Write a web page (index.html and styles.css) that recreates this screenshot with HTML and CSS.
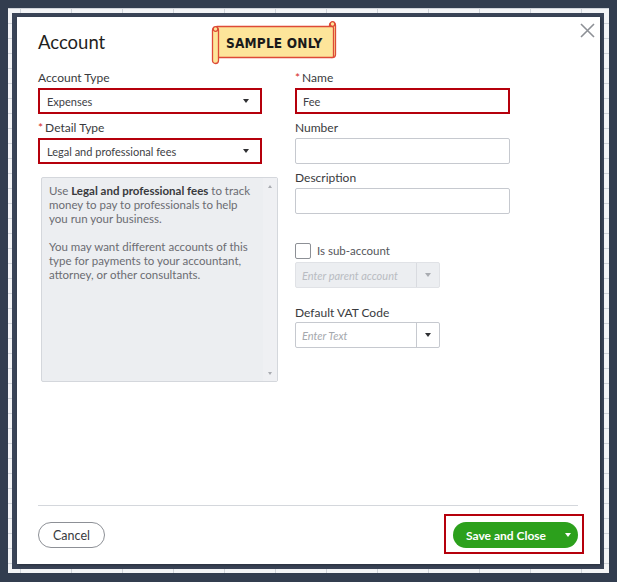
FILE: index.html
```html
<!DOCTYPE html>
<html lang="en">
  <head>
    <meta charset="UTF-8" />
    <meta name="viewport" content="width=device-width, initial-scale=1.0" />
    <title>Account</title>
    <link rel="stylesheet" href="styles.css">
  </head>
  <body>
    <div class="sheet">
      <div class="backdrop">
        <div class="dialog">
          <!-- watermark banner -->
          <div class="sample-badge">
            <svg width="128" height="46" viewBox="0 0 128 46">
              <rect x="119.5" y="3.5" width="6" height="35" rx="3" class="roll" />
              <rect x="5.5" y="7.5" width="118" height="31" rx="1.5" class="roll" />
              <rect x="2.5" y="8.5" width="6" height="36" rx="3" class="roll" />
              <circle cx="5.5" cy="10" r="2.3" class="roll" />
              <circle cx="122.5" cy="5" r="2.3" class="roll" />
            </svg>
            <span>SAMPLE ONLY</span>
          </div>

          <button class="close" type="button" aria-label="Close">
            <svg width="15" height="15" viewBox="0 0 15 15">
              <path d="M1 1 L14 14 M14 1 L1 14" />
            </svg>
          </button>

          <h1 class="title">Account</h1>

          <div class="columns">
            <!-- left column -->
            <div class="col col-left">
              <div class="field">
                <label>Account Type</label>
                <div class="select flagged">
                  <span>Expenses</span>
                  <span class="caret"></span>
                </div>
              </div>
              <div class="field">
                <label class="required">Detail Type</label>
                <div class="select flagged">
                  <span>Legal and professional fees</span>
                  <span class="caret"></span>
                </div>
              </div>
              <div class="help-box">
                <div class="help-text">
                  <p>Use <b>Legal and professional fees</b> to track money to pay to professionals to help you run your business.</p>
                  <p>You may want different accounts of this type for payments to your accountant, attorney, or other consultants.</p>
                </div>
                <div class="help-scroll">
                  <span class="arrow-up"></span>
                  <span class="arrow-down"></span>
                </div>
              </div>
            </div>

            <!-- right column -->
            <div class="col col-right">
              <div class="field">
                <label class="required" for="name">Name</label>
                <input type="text" id="name" class="flagged" value="Fee" />
              </div>
              <div class="field">
                <label for="number">Number</label>
                <input type="text" id="number" />
              </div>
              <div class="field">
                <label for="description">Description</label>
                <input type="text" id="description" />
              </div>

              <label class="check-row">
                <span class="checkbox"></span>
                Is sub-account
              </label>
              <div class="combo disabled">
                <input type="text" placeholder="Enter parent account" disabled />
                <span class="combo-btn"><span class="caret"></span></span>
              </div>

              <div class="field vat">
                <label for="vat">Default VAT Code</label>
                <div class="combo">
                  <input type="text" id="vat" placeholder="Enter Text" />
                  <span class="combo-btn"><span class="caret"></span></span>
                </div>
              </div>
            </div>
          </div>

          <div class="footer">
            <button class="btn-cancel" type="button">Cancel</button>
            <button class="btn-save" type="button">
              <span>Save and Close</span>
              <span class="caret"></span>
            </button>
          </div>
        </div>
      </div>
    </div>
  </body>
</html>
```

FILE: styles.css
```css
* {
  box-sizing: border-box;
  margin: 0;
  padding: 0;
}

:root {
  --navy: #323d4f;
  --frame: #3a4457;
  --text: #393a3d;
  --muted: #6b6c72;
  --border: #c6c9cf;
  --flag: #b5000c;
  --green: #2ca01c;
}

body {
  background-color: var(--navy);
  font-family: 'Lato', 'Liberation Sans', sans-serif;
  color: var(--text);
}

/* spreadsheet showing behind the modal */
.sheet {
  margin: 8px;
  height: 565px;
  padding: 5px 5px 4px 4px;
  display: flex;
  background-color: #f3f4f6;
  background-image: linear-gradient(to right, #cfd3d9 1px, transparent 1px),
    linear-gradient(to bottom, #cfd3d9 1px, transparent 1px);
  background-size: 51px 15px;
  background-position: 12px 0;
}

.backdrop {
  flex: 1;
  display: flex;
  padding: 4px 4px 5px 5px;
  background-color: var(--frame);
}

.dialog {
  flex: 1;
  position: relative;
  display: flex;
  flex-direction: column;
  background-color: white;
  padding: 13px 22px 16px 21px;
  box-shadow: 1px 1px 3px rgba(0, 0, 0, 0.35);
}

.title {
  font-size: 18.5px;
  line-height: 24px;
  font-weight: 400;
  color: #1f1f21;
}

.sample-badge {
  position: absolute;
  left: 193px;
  top: 2px;
  width: 128px;
  height: 46px;
}

.sample-badge svg {
  display: block;
}

.sample-badge .roll {
  fill: #fde59a;
  stroke: #dd4a37;
  stroke-width: 1.3;
}

.sample-badge span {
  position: absolute;
  left: 16px;
  top: 15px;
  font-family: 'DejaVu Sans Condensed', 'DejaVu Sans', sans-serif;
  font-stretch: condensed;
  font-weight: 700;
  font-size: 13.5px;
  line-height: 18px;
  color: #1a1a1a;
  letter-spacing: 0.2px;
}

.close {
  position: absolute;
  top: 6px;
  right: 5px;
  width: 15px;
  height: 15px;
  border: none;
  background: none;
  cursor: pointer;
}

.close svg {
  display: block;
}

.close path {
  stroke: #8d9096;
  stroke-width: 1.6;
  fill: none;
}

.columns {
  display: flex;
  gap: 16px;
  margin-top: 16px;
}

.col-left {
  width: 241px;
}

.col-right {
  width: 216px;
}

.field {
  display: flex;
  flex-direction: column;
  gap: 2px;
  margin-bottom: 6px;
}

label {
  font-size: 12px;
  line-height: 16px;
}

label.required::before {
  content: '*';
  color: #d52b1e;
  margin-right: 2px;
}

input {
  font-family: 'Lato', 'Liberation Sans', sans-serif;
  font-size: 11px;
  color: #404145;
  height: 26px;
  width: 215px;
  border: 1px solid var(--border);
  border-radius: 2px;
  padding: 0 7px;
  outline: none;
}

input::placeholder {
  font-style: italic;
  color: #a5a8ad;
}

.flagged {
  border: 2px solid var(--flag);
  border-radius: 0;
}

input.flagged {
  padding-left: 6px;
}

.select {
  width: 224px;
  height: 26px;
  display: flex;
  align-items: center;
  justify-content: space-between;
  padding: 0 11px 0 7px;
  font-size: 11px;
  color: #404145;
}

.caret {
  width: 0;
  height: 0;
  border-left: 3.5px solid transparent;
  border-right: 3.5px solid transparent;
  border-top: 4px solid #2f3033;
}

.help-box {
  margin: 13px 0 0 3px;
  width: 237px;
  height: 205px;
  display: flex;
  background-color: #eceef1;
  border: 1px solid #d4d7dc;
  border-radius: 2px;
}

.help-text {
  flex: 1;
  padding: 6px 9px 0 7px;
  font-size: 11.5px;
  line-height: 14px;
  color: var(--muted);
}

.help-text b {
  color: var(--text);
  font-weight: 700;
}

.help-text p + p {
  margin-top: 14px;
}

.help-scroll {
  width: 14px;
  display: flex;
  flex-direction: column;
  justify-content: space-between;
  align-items: center;
  padding: 7px 0 6px;
  background-color: #eff0f3;
}

.arrow-up,
.arrow-down {
  width: 0;
  height: 0;
  border-left: 2.5px solid transparent;
  border-right: 2.5px solid transparent;
}

.arrow-up {
  border-bottom: 3px solid #a9acb1;
}

.arrow-down {
  border-top: 3px solid #a9acb1;
}

.check-row {
  display: flex;
  align-items: center;
  gap: 6px;
  margin-top: 29px;
  height: 16px;
  color: #55565b;
  font-size: 11.5px;
}

.checkbox {
  width: 16px;
  height: 16px;
  border: 1px solid #8d9096;
  border-radius: 2px;
  background-color: white;
}

.combo {
  display: flex;
  width: 145px;
  height: 26px;
  border: 1px solid var(--border);
  border-radius: 2px;
}

.combo input {
  flex: 1;
  min-width: 0;
  width: auto;
  height: 24px;
  border: none;
  padding: 0 6px;
  background: transparent;
}

.combo-btn {
  width: 23px;
  flex-shrink: 0;
  display: flex;
  align-items: center;
  justify-content: center;
  border-left: 1px solid var(--border);
}

.combo.disabled {
  margin-top: 3px;
  background-color: #eceef1;
  border-color: #e0e2e6;
}

.combo.disabled input::placeholder {
  color: #b9bcc2;
}

.combo.disabled .combo-btn {
  border-left-color: #d9dbe0;
}

.combo.disabled .caret {
  border-top-color: #a9acb1;
}

.field.vat {
  margin-top: 17px;
  gap: 1px;
}

.footer {
  margin-top: auto;
  border-top: 1px solid #d4d7dc;
  padding-top: 16px;
  display: flex;
  justify-content: space-between;
  align-items: center;
}

.btn-cancel {
  height: 26px;
  width: 67px;
  border: 1px solid #8d9096;
  border-radius: 13px;
  background: white;
  font-family: 'Lato', 'Liberation Sans', sans-serif;
  font-size: 12.5px;
  color: var(--text);
  cursor: pointer;
}

.btn-save {
  position: relative;
  height: 26px;
  width: 125px;
  display: flex;
  align-items: center;
  padding: 0 7px 0 13px;
  border: none;
  border-radius: 13px;
  background-color: var(--green);
  color: white;
  font-family: 'Lato', 'Liberation Sans', sans-serif;
  font-weight: 700;
  font-size: 12px;
  cursor: pointer;
}

.btn-save .caret {
  margin-left: auto;
  border-top-color: white;
}

/* highlight frame drawn round the save button */
.btn-save::after {
  content: '';
  position: absolute;
  top: -8px;
  left: -9px;
  right: -6px;
  bottom: -6px;
  border: 2px solid var(--flag);
}
```
